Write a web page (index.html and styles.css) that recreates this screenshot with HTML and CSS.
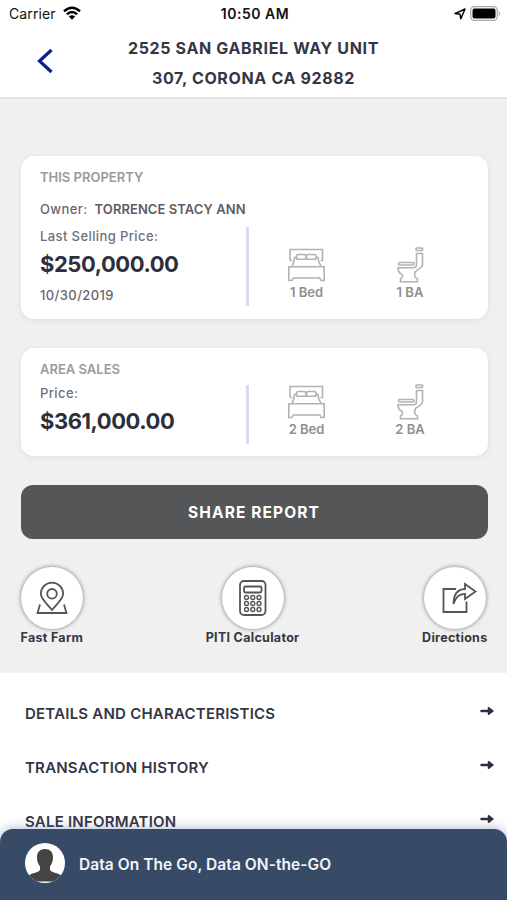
FILE: index.html
```html
<!DOCTYPE html>
<html lang="en">
<head>
<meta charset="utf-8">
<title>Property Report</title>
<link rel="stylesheet" href="styles.css">
</head>
<body>
<svg class="defs" aria-hidden="true">
  <symbol id="bed" viewBox="0 0 37 34">
    <path d="M2 12.500V1.500H34.500V12.500H32.500M2 12.500H4M8.500 9.500H6.500L6 13 4 18.500M28 9.500H30L30.500 13 33 18.500M.8 18.800H36.200V32.500H33L31.800 30H5.200L4 32.500H.8Z"/>
    <rect x="8.500" y="6.500" width="9.500" height="4.800" rx="1.800"/>
    <rect x="18.500" y="6.500" width="9.500" height="4.800" rx="1.800"/>
  </symbol>
  <symbol id="bath" viewBox="0 0 27 36">
    <rect x="19" y="1" width="6.500" height="2.500" rx=".5"/>
    <rect x="1.500" y="15.500" width="15.500" height="2.500" rx="1"/>
    <path d="M19.500 6.500H25.500V17.500C25 21.500 21 22 18.500 24.500C16.500 28 18.500 31 20.500 32V34.800H3.500V32C6.500 30 6 27.500 3.500 26.500C1.500 25 1 23 1 20.700H16.500C18.500 20.700 19.500 19.500 19.500 18Z"/>
  </symbol>
  <symbol id="arrow" viewBox="0 0 14 10">
    <path d="M1.500 5H10"/>
    <path class="head" d="M8.500 1.700 13 5 8.500 8.300Z"/>
  </symbol>
</svg>
<div class="app">
  <div class="status">
    <div class="carrier"><span>Carrier</span>
      <svg width="20" height="15" viewBox="0 0 20 15"><path d="M2 5.200Q10-1.800 18 5.200M4.900 8.300Q10 3.800 15.100 8.300" fill="none" stroke="#000" stroke-width="2.500"/><path d="M10 13.800 6.800 10.500Q10 8 13.200 10.500Z"/></svg>
    </div>
    <div class="time">10:50 AM</div>
    <div class="power">
      <svg width="12" height="12" viewBox="0 0 12 12"><path d="M1 5.600 11 1 6.800 10.800 6 6.200Z" fill="none" stroke="#000" stroke-width="1.500" stroke-linejoin="round"/></svg>
      <svg width="31" height="15" viewBox="0 0 31 15"><rect x=".7" y=".7" width="26.600" height="13.600" rx="3.800" fill="#fff" stroke="#aaa" stroke-width="1.300"/><rect x="2.500" y="2.500" width="23" height="10" rx="2.200"/><path d="M28.800 5Q31.500 7.500 28.800 10Z" fill="#aaa"/></svg>
    </div>
  </div>
  <header class="header">
    <svg class="back" width="17" height="26" viewBox="0 0 17 26"><path d="M15.500 2 3.500 13 15.500 24" fill="none" stroke="#0a1e8c" stroke-width="3.200"/></svg>
    <h1 class="title">2525 SAN GABRIEL WAY UNIT<br>307, CORONA CA 92882</h1>
  </header>
  <main class="main">
    <section class="card property">
      <h2 class="card-title">THIS PROPERTY</h2>
      <p class="owner"><span class="owner-label">Owner:</span><b>TORRENCE STACY ANN</b></p>
      <div class="row">
        <div class="prices">
          <span class="label">Last Selling Price:</span>
          <strong class="amount">$250,000.00</strong>
          <span class="date">10/30/2019</span>
        </div>
        <div class="fact"><svg class="bed"><use href="#bed"/></svg><span>1 Bed</span></div>
        <div class="fact"><svg class="bath"><use href="#bath"/></svg><span>1 BA</span></div>
      </div>
    </section>
    <section class="card area">
      <h2 class="card-title">AREA SALES</h2>
      <div class="row">
        <div class="prices">
          <span class="label">Price:</span>
          <strong class="amount">$361,000.00</strong>
        </div>
        <div class="fact"><svg class="bed"><use href="#bed"/></svg><span>2 Bed</span></div>
        <div class="fact"><svg class="bath"><use href="#bath"/></svg><span>2 BA</span></div>
      </div>
    </section>
    <button class="share">SHARE REPORT</button>
    <div class="actions">
      <a class="action"><span class="circle"><svg width="32" height="34" viewBox="0 0 32 34"><path d="M16 29C12 24 4.800 18 4.800 12.800A11.200 11.200 0 0 1 27.200 12.800C27.200 18 20 24 16 29Z"/><circle cx="16" cy="12.800" r="4.800"/><path d="M4 23.500 1.500 32H30.500L28 23.500"/></svg></span><span>Fast Farm</span></a>
      <a class="action"><span class="circle"><svg width="28" height="36" viewBox="0 0 28 36"><rect x="1" y="1" width="25.500" height="34" rx="4"/><rect x="5" y="6.500" width="17.500" height="6" rx="1.500"/><g stroke-width="1.400"><circle cx="7.500" cy="17.500" r="2"/><circle cx="13.800" cy="17.500" r="2"/><circle cx="20" cy="17.500" r="2"/><circle cx="7.500" cy="23.500" r="2"/><circle cx="13.800" cy="23.500" r="2"/><circle cx="20" cy="23.500" r="2"/><circle cx="7.500" cy="29.500" r="2"/><circle cx="13.800" cy="29.500" r="2"/><circle cx="20" cy="29.500" r="2"/></g></svg></span><span>PITI Calculator</span></a>
      <a class="action"><span class="circle share-arrow"><svg width="35" height="32" viewBox="0 0 35 32"><path d="M14 7H1.500V30H24.500V19.500M11.500 22C11.500 13 14.500 7.500 23 7V2L33.500 9.500 23 17V11.800C16.500 12 14 15 11.500 22Z"/></svg></span><span>Directions</span></a>
    </div>
  </main>
  <nav class="menu">
    <a class="item"><span>DETAILS AND CHARACTERISTICS</span><svg><use href="#arrow"/></svg></a>
    <a class="item"><span>TRANSACTION HISTORY</span><svg><use href="#arrow"/></svg></a>
    <a class="item"><span>SALE INFORMATION</span><svg><use href="#arrow"/></svg></a>
  </nav>
  <footer class="agent">
    <svg width="40" height="40" viewBox="0 0 40 40"><defs><clipPath id="round"><circle cx="20" cy="20" r="20"/></clipPath></defs><g clip-path="url(#round)"><rect width="40" height="40" fill="#fff"/><path d="M20 6C25 6 28 9 28 14C28 19 26.500 21 25 23.500V27C27 30 34 30 37 33V38.500H3V33C6 30 13 30 15 27V23.500C13.500 21 12 19 12 14C12 9 15 6 20 6Z" fill="#444"/></g></svg>
    <span>Data On The Go, Data ON-the-GO</span>
  </footer>
</div>
</body>
</html>
```
FILE: styles.css
```css
* { box-sizing: border-box; }
body { margin: 0; background: #fff; font-family: Inter, "Liberation Sans", sans-serif; color: #353644; }
h1, h2, p { margin: 0; }
svg { display: block; flex: none; }
.defs { position: absolute; width: 0; height: 0; }
.app { width: 507px; height: 900px; overflow: hidden; position: relative; display: flex; flex-direction: column; }
.status { height: 27px; flex: none; display: grid; grid-template-columns: 1fr auto 1fr; align-items: center; padding: 0 6px 0 9px; color: #111; font-size: 14px; }
.carrier { display: flex; align-items: center; gap: 6px; letter-spacing: .1px; }
.time { font-weight: 600; letter-spacing: .5px; }
.power { display: flex; align-items: center; justify-content: flex-end; gap: 4px; }
.header { height: 72px; flex: none; display: grid; grid-template-columns: 96px 1fr 96px; align-items: start; padding-top: 6px; border-bottom: 2px solid #e2e2e2; }
.back { margin: 15px 0 0 36px; }
.title { font-size: 16px; line-height: 30px; font-weight: 700; letter-spacing: .65px; text-align: center; white-space: nowrap; }
.main { height: 574px; flex: none; background: #f0f0f0; padding: 57px 19.500px 0 20.500px; }
.card { background: #fff; border-radius: 13px; box-shadow: 0 1px 6px rgba(0,0,0,.08); padding: 12px 19.500px; }
.property { height: 163px; }
.area { height: 108px; margin-top: 29px; }
.card-title { font-size: 13px; line-height: 18px; font-weight: 600; color: #9a9a9e; }
.owner { margin-top: 14px; line-height: 18px; font-size: 13px; color: #66676e; display: flex; gap: 7px; }
.owner-label, .label { font-weight: 500; letter-spacing: .4px; }
.owner b { font-weight: 600; color: #5c5d66; letter-spacing: .07px; }
.row { display: grid; grid-template-columns: 209px 115px 92px; }
.property .row { margin-top: 9px; height: 79px; }
.area .row { margin-top: 7px; height: 59px; }
.prices { border-right: 3px solid #dcd9ee; display: flex; flex-direction: column; }
.label { font-size: 13px; line-height: 18px; color: #707178; }
.amount { font-size: 22px; line-height: 28px; font-weight: 700; letter-spacing: -.45px; margin-top: 5px; color: #2e2f3e; }
.date { font-size: 13px; line-height: 18px; font-weight: 500; letter-spacing: .4px; margin-top: 8px; color: #66676e; }
.area .label { margin-top: -1px; }
.fact { display: flex; flex-direction: column; align-items: center; font-size: 13px; line-height: 16px; font-weight: 600; color: #8e8f95; }
.fact svg { fill: none; stroke: #b2b2b2; stroke-width: 1.600; }
.bed { width: 37px; height: 34px; margin-top: 21px; }
.bath { width: 27px; height: 36px; margin-top: 20px; }
.bed + span { margin-top: 2px; }
.bath + span { margin-top: 1px; }
.area .bed { margin-top: 0; }
.area .bath { margin-top: -1px; }
.share { display: block; width: 100%; height: 54px; margin-top: 29px; border: 0; border-radius: 12px; background: #555658; color: #fff; font: 700 15.500px Inter, sans-serif; letter-spacing: 1.100px; }
.actions { display: flex; justify-content: space-between; margin-top: 28px; }
.action { display: flex; flex-direction: column; align-items: center; font-size: 12.500px; line-height: 17px; font-weight: 700; letter-spacing: .3px; }
.circle { width: 62px; height: 62px; border-radius: 50%; background: #fff; box-shadow: 0 0 4px rgba(0,0,0,.5); display: grid; place-items: center; }
.circle svg { fill: none; stroke: #555; stroke-width: 1.800; }
.share-arrow svg { margin-left: 10px; }
.menu { padding: 13px 13px 0 25px; }
.item { height: 54px; display: flex; align-items: center; justify-content: space-between; font-size: 15px; letter-spacing: .22px; font-weight: 600; }
.item svg { width: 14px; height: 10px; margin-top: -5px; stroke: #2e2f3e; stroke-width: 2.500; stroke-linecap: round; stroke-linejoin: round; }
.head { fill: #2e2f3e; stroke-width: 1.500; }
.agent { position: absolute; left: 0; right: 0; bottom: 0; height: 71px; border-radius: 13px 13px 0 0; background: #384b66; box-shadow: 0 -2px 10px rgba(70,90,150,.35); color: #f2f5fa; display: flex; align-items: flex-start; gap: 14px; padding: 14px 25px; font-size: 15.500px; letter-spacing: .06px; line-height: 44px; font-weight: 600; }
```
